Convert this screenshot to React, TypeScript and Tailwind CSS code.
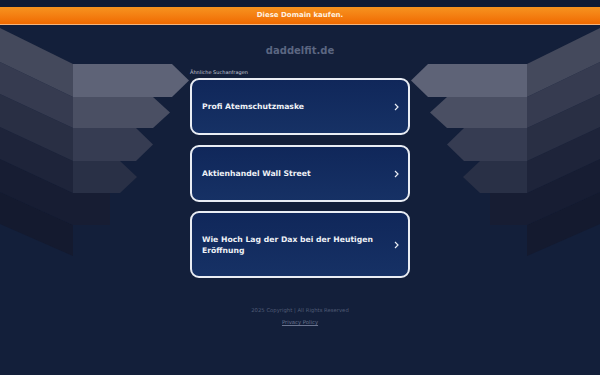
import React from 'react';

const searches = [
  { label: 'Profi Atemschutzmaske', h: 'h-[57px]', mt: 'mt-0' },
  { label: 'Aktienhandel Wall Street', h: 'h-[57px]', mt: 'mt-[10px]' },
  { label: 'Wie Hoch Lag der Dax bei der Heutigen Eröffnung', h: 'h-[67px]', mt: 'mt-[9px]' },
];

// decorative arrow fan, drawn once and mirrored for the right side
function ArrowFan() {
  return (
    <g>
      <polygon points="0,192 73,225 73,256 0,224" fill="#141a2f" />
      <polygon points="0,159 73,193 110,193 110,225 73,225 0,192" fill="#171d33" />
      <polygon points="0,127 73,161 73,193 0,159" fill="#1e243a" />
      <polygon points="0,94 73,128 73,161 0,127" fill="#292f44" />
      <polygon points="0,62 73,97 73,128 0,94" fill="#363b50" />
      <polygon points="0,28 73,64 73,97 0,62" fill="#44495c" />
      <polygon points="73,161 120,161 137,177 120,193 73,193" fill="#293046" />
      <polygon points="73,128 136,128 153,144.5 136,161 73,161" fill="#363c52" />
      <polygon points="73,97 153,97 170,112.5 153,128 73,128" fill="#4a4f63" />
      <polygon points="73,64 172,64 189,80.5 172,97 73,97" fill="#5e6377" />
    </g>
  );
}

export default function App() {
  return (
    <main className="relative w-full h-[375px] overflow-hidden bg-[#131f3a] font-['DejaVu_Sans',sans-serif]">
      <svg className="absolute left-0 top-0 pointer-events-none" width="600" height="375" viewBox="0 0 600 375">
        <ArrowFan />
        <g transform="translate(600,0) scale(-1,1)">
          <ArrowFan />
        </g>
      </svg>

      <div className="relative flex flex-col items-center">
        {/* Top bar */}
        <div className="w-full h-[7px] bg-[#101b34]" />
        <div className="w-full h-[17px] bg-gradient-to-b from-[#f7931e] to-[#f06a00] flex items-center justify-center">
          <span className="text-[7px] font-bold text-[#fff1e0] leading-none">Diese Domain kaufen.</span>
        </div>
        <div className="w-full h-px bg-[#f6b47a]" />

        <h1 className="mt-[20px] text-[10px] leading-[12px] font-bold text-[#5b6681]">daddelfit.de</h1>

        <div className="w-[220px] mt-[12px]">
          <p className="text-[5px] leading-[6px] text-[#c3c9d6]">Ähnliche Suchanfragen</p>
          <div className="mt-[3px] flex flex-col">
            {searches.map((s) => (
              <div
                key={s.label}
                className={`${s.h} ${s.mt} flex items-center justify-between rounded-[9px] border-2 border-[#e9edf4] bg-gradient-to-b from-[#10275a] to-[#163165] pl-[10px] pr-[9px]`}
              >
                <span className="text-[7.7px] leading-[11px] font-bold text-[#eef1f6] max-w-[182px]">{s.label}</span>
                <svg width="5" height="8" viewBox="0 0 5 8" className="shrink-0">
                  <path d="M1 1 L4 4 L1 7" fill="none" stroke="#e9edf4" strokeWidth="1.2" />
                </svg>
              </div>
            ))}
          </div>
        </div>

        <p className="mt-[29px] text-[5.3px] leading-[6px] text-[#505b75]">2025 Copyright | All Rights Reserved</p>
        <a href="#" className="mt-[6px] text-[5.3px] leading-[6px] text-[#6b7590] underline">Privacy Policy</a>
      </div>
    </main>
  );
}
